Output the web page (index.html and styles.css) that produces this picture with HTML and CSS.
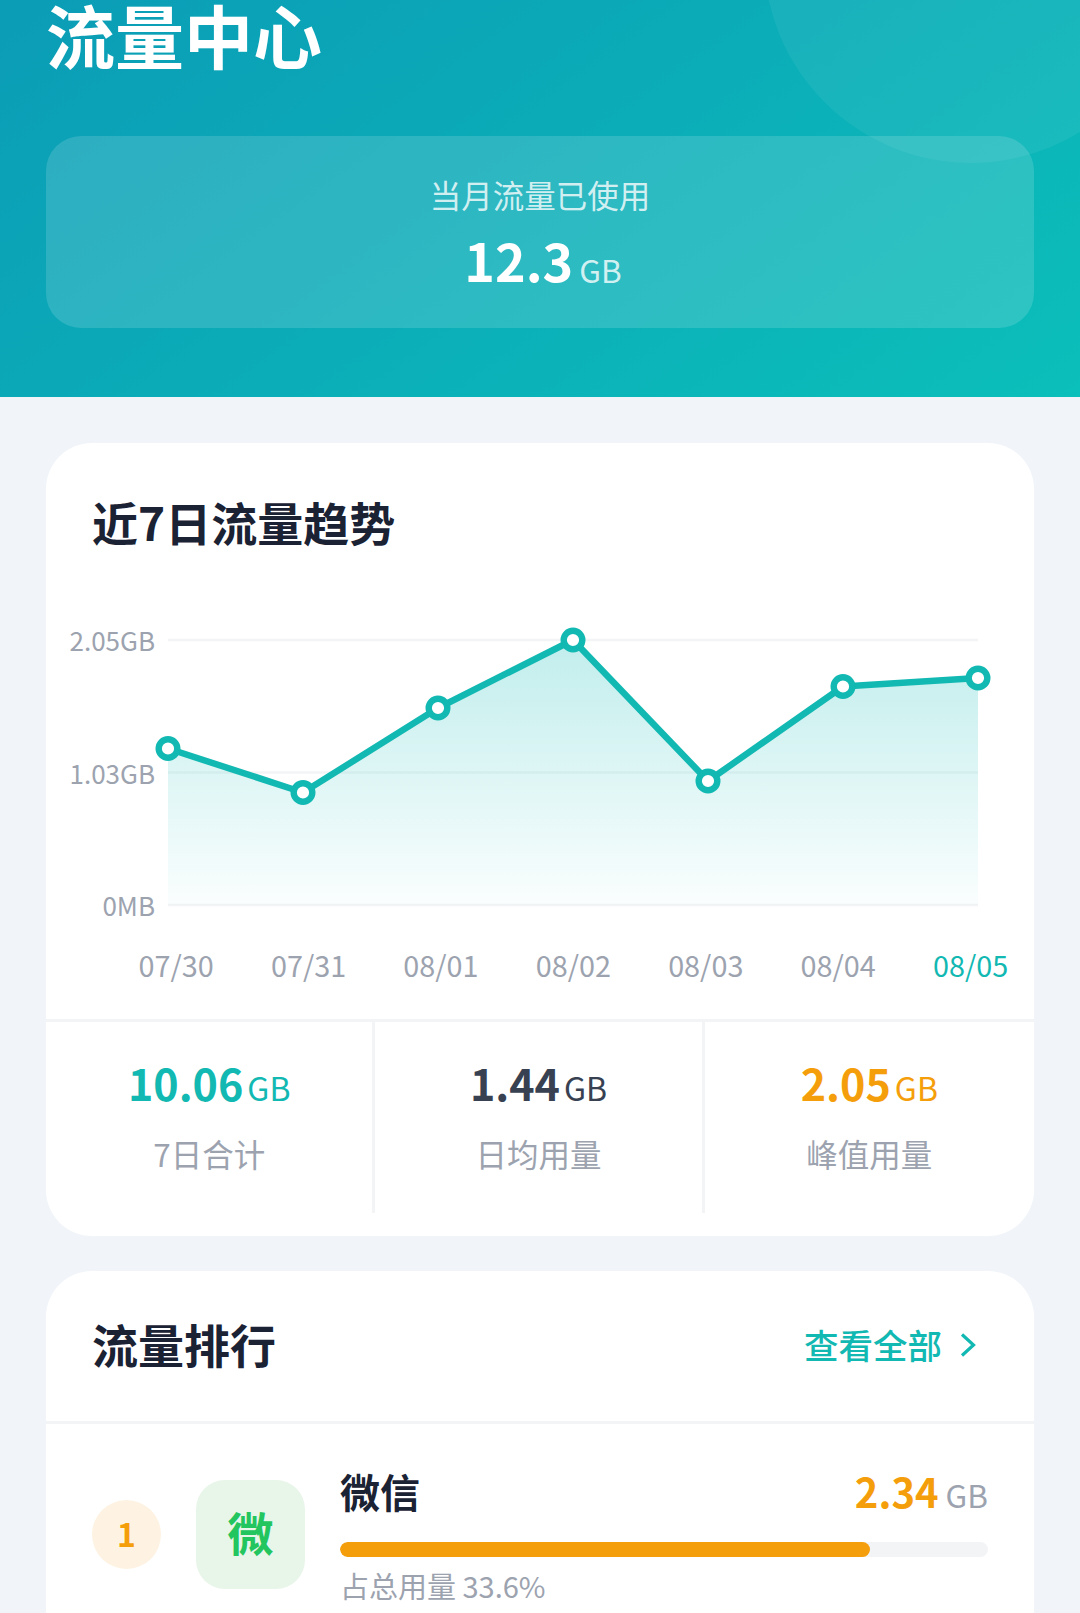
FILE: index.html
```html
<!DOCTYPE html>
<html lang="zh-CN">
<head>
<meta charset="utf-8">
<title>流量中心</title>
<link rel="stylesheet" href="styles.css">
</head>
<body>
<header class="hero">
  <div class="hero-circle"></div>
  <h1 class="hero-title">流量中心</h1>
  <section class="summary">
    <div class="summary-label">当月流量已使用</div>
    <div class="summary-value"><span class="summary-num">12.3</span><span class="summary-unit">GB</span></div>
  </section>
</header>
<main class="content">
  <section class="card">
    <h2 class="card-title trend-title">近7日流量趋势</h2>
    <svg class="chart" viewBox="0 0 988 330" width="988" height="330" aria-label="近7日流量趋势图">
      <defs>
        <linearGradient id="area" x1="0" y1="0" x2="0" y2="1">
          <stop offset="0" stop-color="#10bcb8" stop-opacity="0.26"/>
          <stop offset="1" stop-color="#10bcb8" stop-opacity="0.02"/>
        </linearGradient>
      </defs>
      <g class="grid">
        <line x1="122" y1="40" x2="932" y2="40"/>
        <line x1="122" y1="172.500" x2="932" y2="172.500"/>
        <line x1="122" y1="305" x2="932" y2="305"/>
      </g>
      <g class="y-labels">
        <text x="109" y="51">2.05GB</text>
        <text x="109" y="183.500">1.03GB</text>
        <text x="109" y="316">0MB</text>
      </g>
      <polygon fill="url(#area)" points="122,148.500 257,192.500 392,108 527,40 662,181 797,86.500 932,78 932,305 122,305"/>
      <polyline class="line" points="122,148.500 257,192.500 392,108 527,40 662,181 797,86.500 932,78"/>
      <g class="dots">
        <circle cx="122" cy="148.500" r="9.300"/>
        <circle cx="257" cy="192.500" r="9.300"/>
        <circle cx="392" cy="108" r="9.300"/>
        <circle cx="527" cy="40" r="9.300"/>
        <circle cx="662" cy="181" r="9.300"/>
        <circle cx="797" cy="86.500" r="9.300"/>
        <circle cx="932" cy="78" r="9.300"/>
      </g>
    </svg>
    <div class="x-labels">
      <span>07/30</span><span>07/31</span><span>08/01</span><span>08/02</span><span>08/03</span><span>08/04</span><span class="x-active">08/05</span>
    </div>
    <div class="stats">
      <div class="stat">
        <div class="stat-value teal"><b>10.06</b><span>GB</span></div>
        <div class="stat-label">7日合计</div>
      </div>
      <div class="stat">
        <div class="stat-value slate"><b>1.44</b><span>GB</span></div>
        <div class="stat-label">日均用量</div>
      </div>
      <div class="stat">
        <div class="stat-value orange"><b>2.05</b><span>GB</span></div>
        <div class="stat-label">峰值用量</div>
      </div>
    </div>
  </section>
  <section class="card">
    <div class="rank-head">
      <h2 class="card-title">流量排行</h2>
      <a class="view-all">查看全部
        <svg class="chevron" viewBox="0 0 16 24" width="16" height="24"><path d="M2 1.500 L13.500 12 L2 22.500"/></svg>
      </a>
    </div>
    <div class="rank-row">
      <div class="rank-badge">1</div>
      <div class="app-icon">微</div>
      <div class="app-info">
        <div class="app-top">
          <span class="app-name">微信</span>
          <span class="app-usage"><b>2.34</b><span>GB</span></span>
        </div>
        <div class="bar"><div class="bar-fill" style="width:81.8%"></div></div>
        <div class="app-share">占总用量 33.6%</div>
      </div>
    </div>
  </section>
</main>
</body>
</html>
```
FILE: styles.css
```css
* { box-sizing: border-box; }
html, body { margin: 0; padding: 0; height: 1613px; overflow: hidden; }
body {
  background: #f1f5f9;
  font-family: "Noto Sans CJK SC", "Noto Sans", sans-serif;
  color: #1a2233;
}
.hero {
  position: relative;
  height: 397px;
  padding: 0 46px;
  overflow: hidden;
  background: linear-gradient(145deg, #0b9cb6 0%, #0bbfba 100%);
}
.hero-circle {
  position: absolute;
  left: 764px;
  top: -251px;
  width: 414px;
  height: 414px;
  border-radius: 50%;
  background: rgba(255, 255, 255, 0.06);
}
.hero-title {
  position: relative;
  margin: 0;
  font-size: 69px;
  line-height: 68px;
  font-weight: 700;
  color: #fff;
}
.summary {
  position: relative;
  margin-top: 68px;
  height: 192px;
  border-radius: 35px;
  background: rgba(255, 255, 255, 0.14);
  display: flex;
  flex-direction: column;
  align-items: center;
  padding-top: 35px;
}
.summary-label {
  font-size: 31.500px;
  line-height: 46px;
  color: rgba(255, 255, 255, 0.8);
}
.summary-value {
  margin-top: 8px;
  padding-left: 6px;
  color: #fff;
  line-height: 70px;
  white-space: nowrap;
}
.summary-num { font-size: 52px; font-weight: 700; }
.summary-unit {
  margin-left: 6px;
  font-size: 31.500px;
  vertical-align: -1px;
  color: rgba(255, 255, 255, 0.8);
}

.content {
  padding: 46px 46px 0;
  display: flex;
  flex-direction: column;
  gap: 35px;
}
.card {
  background: #fff;
  border-radius: 46px;
  overflow: hidden;
}
.card-title {
  margin: 0;
  font-size: 46px;
  line-height: 60px;
  font-weight: 700;
  color: #1a2233;
}
.trend-title { padding: 48px 46px 0; }
.chart { display: block; margin-top: 49px; }
.grid line { stroke: #f3f4f6; stroke-width: 2.500; }
.y-labels text {
  font-size: 26px;
  fill: #9ca3af;
  text-anchor: end;
}
.line { fill: none; stroke: #12b8b2; stroke-width: 6.500; stroke-linejoin: round; }
.dots circle { fill: #fff; stroke: #12b8b2; stroke-width: 6.400; }
.x-labels {
  display: grid;
  grid-template-columns: repeat(7, 132.400px);
  margin-left: 64px;
  margin-top: 13px;
  font-size: 28.800px;
  line-height: 44px;
  color: #9ca3af;
  text-align: center;
}
.x-active { color: #12b8b2; }
.stats {
  display: grid;
  grid-template-columns: repeat(3, 1fr);
  margin-top: 32px;
  margin-bottom: 23px;
  border-top: 3px solid #f3f4f6;
}
.stat {
  height: 191px;
  display: flex;
  flex-direction: column;
  align-items: center;
  padding-top: 27px;
  border-right: 3px solid #f3f4f6;
}
.stat:last-child { border-right: 0; }
.stat-value {
  display: flex;
  align-items: baseline;
  gap: 4px;
  line-height: 66px;
}
.stat-value b { font-size: 43px; font-weight: 700; }
.stat-value span { font-size: 32px; }
.stat-label {
  margin-top: 10px;
  font-size: 31.500px;
  line-height: 46px;
  color: #9ca3af;
}
.teal { color: #12b8b2; }
.slate { color: #374151; }
.orange { color: #f59e0b; }

.rank-head {
  height: 153px;
  padding: 0 46px 6px;
  display: flex;
  align-items: center;
  justify-content: space-between;
  border-bottom: 3px solid #f3f4f6;
}
.view-all {
  display: flex;
  align-items: center;
  gap: 18px;
  margin-top: 2px;
  font-size: 34.500px;
  font-weight: 500;
  color: #12b8b2;
  padding-right: 12px;
}
.chevron { margin-top: 2px; fill: none; stroke: #12b8b2; stroke-width: 3.200; }
.rank-row {
  display: flex;
  align-items: center;
  padding: 38px 46px 60px;
}
.rank-badge {
  flex: none;
  width: 69px;
  height: 69px;
  padding-bottom: 2px;
  border-radius: 50%;
  background: #fef3e2;
  color: #f59e0b;
  font-size: 32px;
  font-weight: 700;
  display: flex;
  align-items: center;
  justify-content: center;
}
.app-icon {
  flex: none;
  width: 109px;
  height: 109px;
  margin-left: 35px;
  padding-bottom: 7px;
  border-radius: 29px;
  background: #e8f5e9;
  color: #22c55e;
  font-size: 46px;
  font-weight: 700;
  display: flex;
  align-items: center;
  justify-content: center;
}
.app-info { flex: 1; margin-left: 35px; }
.app-top {
  display: flex;
  align-items: baseline;
  justify-content: space-between;
  line-height: 58px;
}
.app-name { font-size: 40px; font-weight: 700; color: #1a2233; }
.app-usage b { font-size: 40px; font-weight: 700; color: #f59e0b; }
.app-usage span { font-size: 31.500px; color: #9ca3af; margin-left: 7px; }
.bar {
  margin-top: 12px;
  height: 15px;
  border-radius: 8px;
  background: #f3f4f6;
  overflow: hidden;
}
.bar-fill {
  height: 100%;
  border-radius: 8px;
  background: #f59e0b;
}
.app-share {
  margin-top: 7px;
  font-size: 29px;
  line-height: 42px;
  color: #9ca3af;
}
```
